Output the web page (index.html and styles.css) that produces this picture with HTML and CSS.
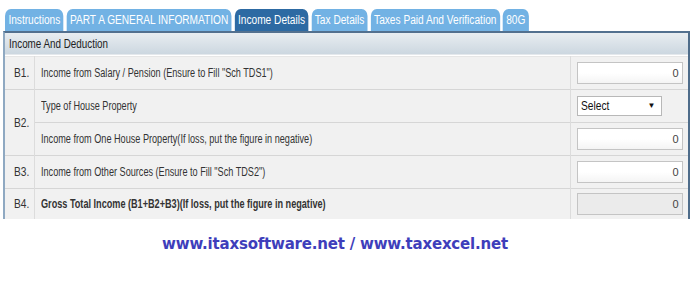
FILE: index.html
```html
<!DOCTYPE html>
<html lang="en">
<head>
  <meta charset="UTF-8" />
  <title>Income Details</title>
  <link rel="stylesheet" href="styles.css">
</head>
<body>

  <div class="tabs">
    <span class="tab">Instructions</span>
    <span class="tab">PART A GENERAL INFORMATION</span>
    <span class="tab active">Income Details</span>
    <span class="tab">Tax Details</span>
    <span class="tab">Taxes Paid And Verification</span>
    <span class="tab">80G</span>
  </div>

  <div class="panel">
    <div class="panel-head"><span class="narrow">Income And Deduction</span></div>
    <table class="form">
      <tr>
        <td class="code"><span class="narrow">B1.</span></td>
        <td class="label"><span class="narrow">Income from Salary / Pension (Ensure to Fill "Sch TDS1")</span></td>
        <td class="field"><input type="text" value="0"></td>
      </tr>
      <tr>
        <td class="code" rowspan="2"><span class="narrow">B2.</span></td>
        <td class="label"><span class="narrow">Type of House Property</span></td>
        <td class="field"><div class="select"><span class="narrow">Select</span><span class="arrow">&#9660;</span></div></td>
      </tr>
      <tr>
        <td class="label"><span class="narrow">Income from One House Property(If loss, put the figure in negative)</span></td>
        <td class="field"><input type="text" value="0"></td>
      </tr>
      <tr>
        <td class="code"><span class="narrow">B3.</span></td>
        <td class="label"><span class="narrow">Income from Other Sources (Ensure to Fill "Sch TDS2")</span></td>
        <td class="field"><input type="text" value="0"></td>
      </tr>
      <tr>
        <td class="code"><span class="narrow">B4.</span></td>
        <td class="label total"><span class="narrow">Gross Total Income (B1+B2+B3)(If loss, put the figure in negative)</span></td>
        <td class="field"><input type="text" value="0" class="readonly" readonly></td>
      </tr>
    </table>
  </div>

  <p class="site">www.itaxsoftware.net / www.taxexcel.net</p>

</body>
</html>
```

FILE: styles.css
```css
* {
  box-sizing: border-box;
}

body {
  margin: 0;
  background: #fff;
  color: #333;
  font-family: "Liberation Sans", Arial, sans-serif;
  font-size: 12px;
}

/* the original font is a narrow Arial, so squeeze the text */
.narrow {
  display: inline-block;
  transform: scaleX(0.76);
  transform-origin: left center;
  white-space: nowrap;
}

.tabs {
  display: flex;
  gap: 3.5px;
  margin: 9px 0 0 5px;
  transform: scaleX(0.845);
  transform-origin: left top;
}

.tab {
  height: 22px;
  line-height: 23px;
  padding: 0 4px;
  background: #72b2e4;
  color: #fff;
  border-radius: 7px 7px 0 0;
}

.tab.active {
  background: #2d6aa3;
}

.panel {
  width: 687px;
  margin-left: 3px;
  border-top: 2px solid #52708f;
  border-right: 2px solid #4e6c8a;
  border-left: 2px solid #8fa9c2;
}

.panel-head {
  height: 22px;
  line-height: 22px;
  padding-left: 4px;
  background: linear-gradient(#e8edf1, #ccd7e0);
  color: #222;
  border-bottom: 1px solid #e4e8ec;
}

.panel-head .narrow {
  transform: scaleX(0.82);
}

.form {
  width: 100%;
  border-collapse: collapse;
  margin-top: 1px;
  background: #f1f1f1;
}

.form td {
  border-top: 1px solid #d6d6d6;
  height: 33px;
  padding: 0;
}

.form tr:first-child td {
  border-top: 1px solid #e6e6e6;
}

.form tr:last-child td {
  height: 30px;
}

.code {
  width: 29px;
  padding-left: 9px !important;
  border-right: 1px solid #dcdcdc;
}

.code .narrow {
  transform: scaleX(0.85);
}

.label {
  padding-left: 6px !important;
  border-right: 1px solid #dcdcdc;
}

.label.total {
  font-weight: bold;
}

.field {
  width: 118px;
  padding-left: 6px !important;
}

.field input {
  width: 106px;
  height: 22px;
  border: 1px solid #c4c4c4;
  background: linear-gradient(#fff 50%, #f4f4f4);
  text-align: right;
  font: inherit;
  font-size: 11px;
  padding: 0 3px;
  color: #444;
  display: block;
}

.field input.readonly {
  background: #ebebeb;
}

.select {
  width: 85px;
  height: 20px;
  line-height: 18px;
  border: 1px solid #b8b8b8;
  background: #fff;
  padding: 0 3px;
  display: flex;
  justify-content: space-between;
  color: #111;
}

.select .narrow {
  transform: scaleX(0.85);
}

.select .arrow {
  font-size: 8px;
  padding-right: 2px;
}

.site {
  margin: 16px 0 0;
  text-align: center;
  padding-right: 30px;
  font-family: "DejaVu Sans", Verdana, sans-serif;
  font-weight: bold;
  font-size: 15px;
  letter-spacing: -0.2px;
  color: #3e3ebb;
}
```
